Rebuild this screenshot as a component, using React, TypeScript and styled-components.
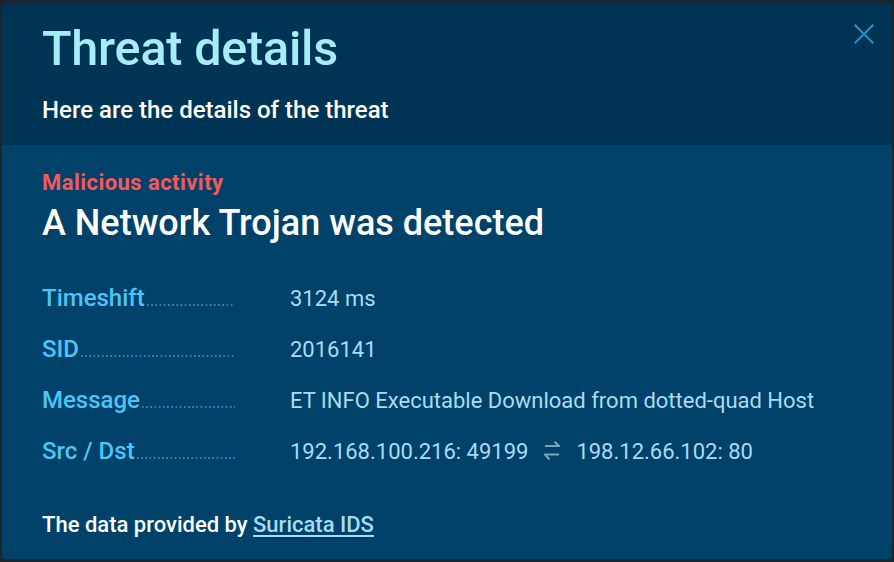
import React from "react";
import styled, { createGlobalStyle } from "styled-components";

const Global = createGlobalStyle`
  html, body { margin: 0; padding: 0; }
  body {
    background: #1d252c;
    font-family: Roboto, "Noto Sans", "Liberation Sans", sans-serif;
    width: 894px;
    height: 562px;
    overflow: hidden;
  }
`;

const Backdrop = styled.div`
  box-sizing: border-box;
  width: 894px;
  height: 562px;
  padding: 4px 2px 3px 2px;
  display: flex;
`;

const Modal = styled.div`
  flex: 1;
  display: flex;
  flex-direction: column;
  background: #00426a;
  border-radius: 3px;
  overflow: hidden;
  position: relative;
`;

const Header = styled.header`
  background: #003455;
  padding: 17px 40px 0 40px;
  height: 141px;
  box-sizing: border-box;
`;

const Title = styled.h1`
  margin: 0;
  color: #a7ecf9;
  font-size: 48.5px;
  font-weight: 500;
  line-height: 56px;
  letter-spacing: -0.2px;
`;

const Subtitle = styled.p`
  margin: 19px 0 0 0;
  color: #ffffff;
  font-size: 24px;
  font-weight: 500;
  line-height: 28px;
`;

const Close = styled.button`
  position: absolute;
  top: 16px;
  right: 14px;
  width: 28px;
  height: 28px;
  padding: 0;
  border: 0;
  background: transparent;
  display: flex;
  align-items: center;
  justify-content: center;
  cursor: pointer;
`;

const Body = styled.section`
  padding: 25px 40px 0 40px;
  display: flex;
  flex-direction: column;
`;

const Category = styled.div`
  color: #f5585b;
  font-size: 22px;
  font-weight: 700;
  line-height: 26px;
  letter-spacing: 0.45px;
`;

const Headline = styled.h2`
  margin: 5px 0 0 0;
  color: #ffffff;
  font-size: 36px;
  font-weight: 500;
  line-height: 44px;
`;

const Details = styled.dl`
  margin: 39px 0 0 0;
  display: grid;
  grid-template-columns: 193px 1fr;
  column-gap: 55px;
  row-gap: 22px;
  align-items: baseline;
`;

const Term = styled.dt`
  display: flex;
  align-items: baseline;
  color: #4ec4f6;
  font-size: 24px;
  font-weight: 500;
  line-height: 28px;
`;

const Leader = styled.span`
  flex: 1;
  height: 2px;
  margin: 0 0 2px 2px;
  background-image: linear-gradient(to right, #3a7fb2 50%, transparent 50%);
  background-size: 4.2px 2px;
  background-repeat: repeat-x;
`;

const Value = styled.dd`
  margin: 0;
  color: #a9dcf4;
  font-size: 22px;
  font-weight: 400;
  line-height: 28px;
  white-space: nowrap;
`;

const SwapGlyph = styled.svg`
  display: inline-block;
  vertical-align: -2px;
  margin: 0 16px 0 16px;
`;

const Footer = styled.p`
  margin: 46px 0 0 0;
  color: #ffffff;
  font-size: 22px;
  font-weight: 500;
  line-height: 26px;
`;

const Link = styled.a`
  color: #a9dcf4;
  text-decoration: underline;
  text-underline-offset: 3px;
`;

const SwapIcon = () => (
  <SwapGlyph width="16" height="20" viewBox="0 0 16 20" fill="none" stroke="#7aa3bf" strokeWidth="2">
    <path d="M1 5 H15 L10.5 0.8" />
    <path d="M15 13.5 H1 L5.5 18.5" />
  </SwapGlyph>
);

const rows: { label: string; value: React.ReactNode }[] = [
  { label: "Timeshift", value: "3124 ms" },
  { label: "SID", value: "2016141" },
  { label: "Message", value: "ET INFO Executable Download from dotted-quad Host" },
  {
    label: "Src / Dst",
    value: (
      <>
        192.168.100.216: 49199
        <SwapIcon />
        198.12.66.102: 80
      </>
    ),
  },
];

export default function App() {
  return (
    <>
      <Global />
      <Backdrop>
        <Modal>
          <Header>
            <Title>Threat details</Title>
            <Subtitle>Here are the details of the threat</Subtitle>
          </Header>
          <Close aria-label="Close">
            <svg width="22" height="22" viewBox="0 0 22 22" stroke="#2d8bc2" strokeWidth="2.2" strokeLinecap="square">
              <path d="M2.5 2.5 L19.5 19.5 M19.5 2.5 L2.5 19.5" />
            </svg>
          </Close>
          <Body>
            <Category>Malicious activity</Category>
            <Headline>A Network Trojan was detected</Headline>
            <Details>
              {rows.map((r) => (
                <React.Fragment key={r.label}>
                  <Term>
                    {r.label}
                    <Leader />
                  </Term>
                  <Value>{r.value}</Value>
                </React.Fragment>
              ))}
            </Details>
            <Footer>
              The data provided by <Link href="#">Suricata IDS</Link>
            </Footer>
          </Body>
        </Modal>
      </Backdrop>
    </>
  );
}
